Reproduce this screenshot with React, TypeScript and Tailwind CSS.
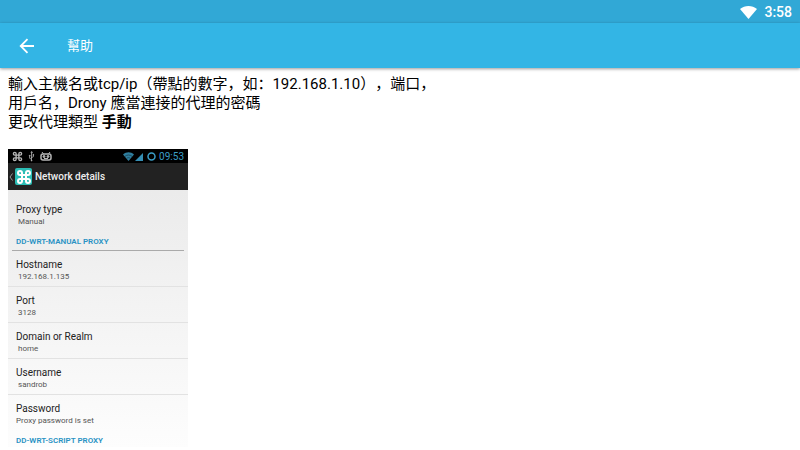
import { Command, Usb } from "lucide-react";

const fields = [
  { label: "Hostname", value: "192.168.1.135" },
  { label: "Port", value: "3128" },
  { label: "Domain or Realm", value: "home" },
  { label: "Username", value: "sandrob" },
];

function StatusBar() {
  return (
    <div className="flex h-[23px] items-center justify-end gap-[7px] bg-[#31a8d6] pt-px pr-2 text-white">
      <svg width="17" height="13" viewBox="0 0 17 13" fill="currentColor" aria-hidden="true">
        <path d="M8.500 13 0 2.900C2.500 1 5.400 0 8.500 0s6 1 8.500 2.900z" />
      </svg>
      <span className="text-sm leading-5 font-medium">3:58</span>
    </div>
  );
}

function Toolbar() {
  return (
    <header className="flex h-[45px] items-center bg-[#33b5e5] text-white shadow-[0_1px_3px_rgba(0,0,0,0.4)]">
      <button type="button" aria-label="Back" className="ml-[19px] flex w-4 justify-center">
        <svg width="16" height="16" viewBox="0 0 16 16" fill="none" stroke="currentColor" strokeWidth="1.800" aria-hidden="true">
          <path d="M15 8H2M8.500 1.200 1.700 8l6.800 6.800" />
        </svg>
      </button>
      <h1 className="ml-8 text-[13px] leading-5 font-normal">幫助</h1>
    </header>
  );
}

function Field({ label, value, indent = true }: { label: string; value: string; indent?: boolean }) {
  return (
    <div className="pl-2">
      <dt className="text-[10px] leading-3 text-[#222]">{label}</dt>
      <dd className={indent ? "pl-0.5 text-[8px] leading-3 text-[#555]" : "text-[8px] leading-3 text-[#555]"}>{value}</dd>
    </div>
  );
}

function SectionTitle({ children }: { children: string }) {
  return <h2 className="text-[8px] leading-3 font-semibold text-[#2a93c4]">{children}</h2>;
}

function NetworkDetails() {
  return (
    <section className="w-[180px] bg-linear-to-b from-[#e8e8e8] to-[#fdfdfd]">
      <div className="flex h-3.5 items-center bg-black px-1 text-[#b5b5b5]">
        <Command size={11} strokeWidth={3} />
        <Usb size={9} strokeWidth={2} className="ml-1 -rotate-45" />
        <svg className="ml-1" width="12" height="9" viewBox="0 0 12 9" fill="none" stroke="currentColor" aria-hidden="true">
          <rect x="1" y="2" width="10" height="6" rx="2" strokeWidth="1.500" />
          <path d="m2 0 1.500 2M10 0 8.500 2M4 6.500h4" />
          <circle cx="4" cy="4.500" r="1" fill="currentColor" />
          <circle cx="8" cy="4.500" r="1" fill="currentColor" />
        </svg>
        <div className="ml-auto flex items-center gap-[3px] text-[#3b9dc6]">
          <svg width="21" height="9" viewBox="0 0 21 9" fill="currentColor" aria-hidden="true">
            <path d="M5.500 9 0 2.500C3.200-.4 7.800-.4 11 2.500z" opacity=".8" />
            <path d="M2 4.300c2-1.700 5-1.700 7 0M3.800 6.300c1-.8 2.400-.8 3.400 0" fill="none" stroke="#102c38" strokeWidth=".6" />
            <path d="M20 9h-8l8-8z" opacity=".9" />
          </svg>
          <svg width="9" height="9" viewBox="0 0 9 9" fill="none" stroke="currentColor" strokeWidth="1.500" aria-hidden="true">
            <circle cx="4.500" cy="4.500" r="3.500" />
          </svg>
          <span className="pt-0.5 text-[10px] leading-3">09:53</span>
        </div>
      </div>
      <div className="flex h-[27px] items-center bg-[#222] text-[#eee]">
        <svg className="mr-0.5 ml-px" width="4" height="8" viewBox="0 0 4 8" fill="none" stroke="#999" aria-hidden="true">
          <path d="M3.500.5 1 4l2.500 3.500" />
        </svg>
        <span className="flex size-[17px] items-center justify-center rounded-xs bg-[#2bbdb5] text-white">
          <Command size={16} strokeWidth={3} />
        </span>
        <h2 className="ml-[3px] text-[10px] leading-3 font-medium">Network details</h2>
      </div>
      <div className="pt-3.5">
        <dl>
          <Field label="Proxy type" value="Manual" />
        </dl>
        <div className="mx-1 border-b border-[#aaa] pt-2 pb-0.5 pl-1">
          <SectionTitle>DD-WRT-MANUAL PROXY</SectionTitle>
        </div>
        <dl>
          {fields.map((field) => (
            <div key={field.label} className="h-9 border-b border-[#e2e2e2] pt-2">
              <Field label={field.label} value={field.value} />
            </div>
          ))}
          <div className="pt-2">
            <Field label="Password" value="Proxy password is set" indent={false} />
          </div>
        </dl>
        <div className="pt-2 pl-2">
          <SectionTitle>DD-WRT-SCRIPT PROXY</SectionTitle>
        </div>
      </div>
    </section>
  );
}

export default function App() {
  return (
    <div className="h-screen overflow-hidden bg-white font-[Roboto,'Noto_Sans_CJK_SC',sans-serif]">
      <StatusBar />
      <Toolbar />
      <main className="px-2 pt-[7px]">
        <p className="text-[15px] leading-[19px] text-black [text-spacing-trim:space-all]">
          輸入主機名或tcp/ip（帶點的數字，如：192.168.1.10），端口，
          <br />
          用戶名，Drony 應當連接的代理的密碼
          <br />
          更改代理類型 <b>手動</b>
        </p>
        <div className="mt-[17px]">
          <NetworkDetails />
        </div>
      </main>
    </div>
  );
}
